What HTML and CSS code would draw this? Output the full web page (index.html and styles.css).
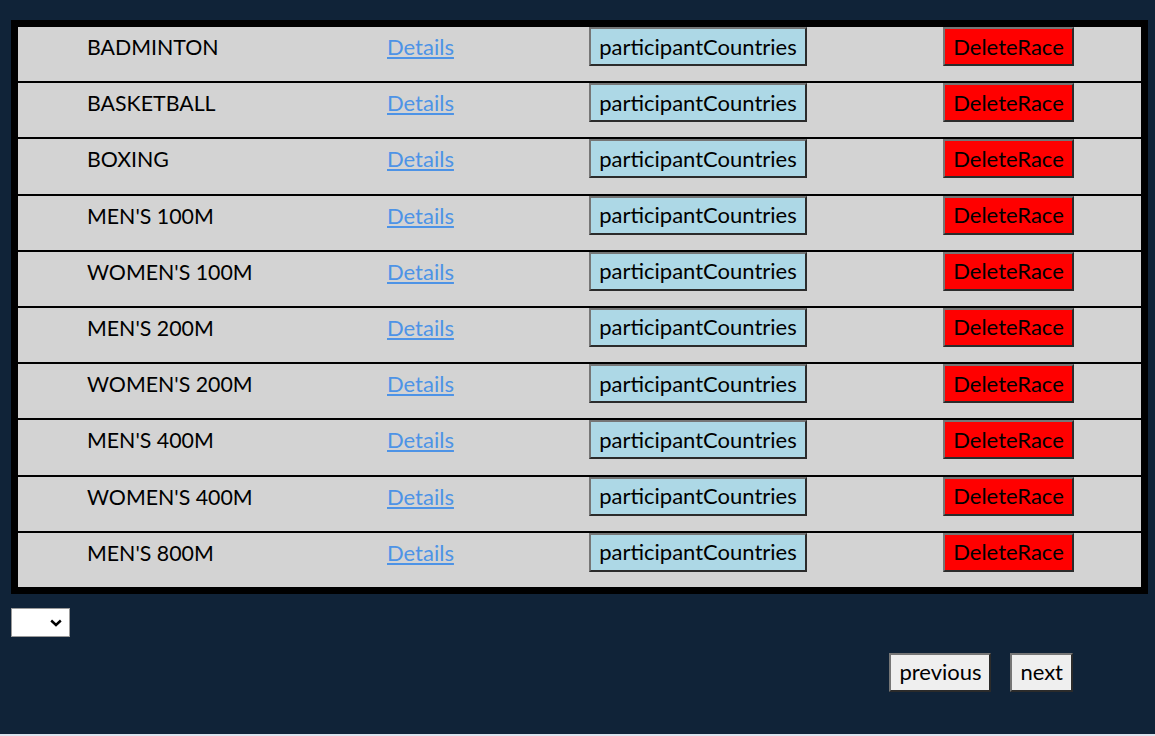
FILE: index.html
```html
<!DOCTYPE html>
<html>
<head>
<meta charset="utf-8">
<link rel="stylesheet" href="styles.css">
</head>
<body>
<div class="page">
  <div class="races">
    <div class="race-row">
      <span class="race-name">BADMINTON</span>
      <a class="details" href="#">Details</a>
      <div><button class="btn btn-countries">participantCountries</button></div>
      <div><button class="btn btn-delete">DeleteRace</button></div>
    </div>
    <div class="race-row">
      <span class="race-name">BASKETBALL</span>
      <a class="details" href="#">Details</a>
      <div><button class="btn btn-countries">participantCountries</button></div>
      <div><button class="btn btn-delete">DeleteRace</button></div>
    </div>
    <div class="race-row">
      <span class="race-name">BOXING</span>
      <a class="details" href="#">Details</a>
      <div><button class="btn btn-countries">participantCountries</button></div>
      <div><button class="btn btn-delete">DeleteRace</button></div>
    </div>
    <div class="race-row">
      <span class="race-name">MEN'S 100M</span>
      <a class="details" href="#">Details</a>
      <div><button class="btn btn-countries">participantCountries</button></div>
      <div><button class="btn btn-delete">DeleteRace</button></div>
    </div>
    <div class="race-row">
      <span class="race-name">WOMEN'S 100M</span>
      <a class="details" href="#">Details</a>
      <div><button class="btn btn-countries">participantCountries</button></div>
      <div><button class="btn btn-delete">DeleteRace</button></div>
    </div>
    <div class="race-row">
      <span class="race-name">MEN'S 200M</span>
      <a class="details" href="#">Details</a>
      <div><button class="btn btn-countries">participantCountries</button></div>
      <div><button class="btn btn-delete">DeleteRace</button></div>
    </div>
    <div class="race-row">
      <span class="race-name">WOMEN'S 200M</span>
      <a class="details" href="#">Details</a>
      <div><button class="btn btn-countries">participantCountries</button></div>
      <div><button class="btn btn-delete">DeleteRace</button></div>
    </div>
    <div class="race-row">
      <span class="race-name">MEN'S 400M</span>
      <a class="details" href="#">Details</a>
      <div><button class="btn btn-countries">participantCountries</button></div>
      <div><button class="btn btn-delete">DeleteRace</button></div>
    </div>
    <div class="race-row">
      <span class="race-name">WOMEN'S 400M</span>
      <a class="details" href="#">Details</a>
      <div><button class="btn btn-countries">participantCountries</button></div>
      <div><button class="btn btn-delete">DeleteRace</button></div>
    </div>
    <div class="race-row">
      <span class="race-name">MEN'S 800M</span>
      <a class="details" href="#">Details</a>
      <div><button class="btn btn-countries">participantCountries</button></div>
      <div><button class="btn btn-delete">DeleteRace</button></div>
    </div>
  </div>
  <div class="select-wrap">
    <select class="page-size"><option></option></select>
    <svg class="chevron" width="12" height="8" viewBox="0 0 12 8"><path d="M1.2 1.5 L6 6 L10.8 1.5" fill="none" stroke="#000" stroke-width="2.4"/></svg>
  </div>
  <div class="pager">
    <button class="btn btn-page btn-prev">previous</button>
    <button class="btn btn-page">next</button>
  </div>
</div>
</body>
</html>
```
FILE: styles.css
```css
html {
  background: #dde3ee;
}
body {
  margin: 0;
  font-family: Lato, "Open Sans", sans-serif;
}
.page {
  background: #102338;
  height: 734px;
  box-sizing: border-box;
  padding: 20px 7px 0 11px;
}
.races {
  width: 1137px;
  box-sizing: border-box;
  border: 7px solid #000;
  background: #d3d3d3;
}
.race-row {
  display: grid;
  grid-template-columns: 300px 202px 354px 1fr;
  align-items: start;
  height: 56.2px;
  box-sizing: border-box;
  padding-left: 69px;
  border-bottom: 2px solid #000;
  font-size: 21.33px;
  line-height: 39px;
  color: #000;
}
.race-row:last-child {
  border-bottom: none;
  height: 54.2px;
}
.race-name {
  white-space: nowrap;
  padding-top: 1px;
}
.details {
  color: #4d93e6;
  font-size: 22px;
  justify-self: start;
}
.btn {
  font-family: Lato, "Open Sans", sans-serif;
  font-size: 22px;
  height: 39px;
  line-height: 26px;
  padding: 0 8px;
  border-width: 2px;
  border-style: solid;
  border-color: #767676 #2b2b2b #2b2b2b #767676;
  border-radius: 0;
  color: #000;
  display: block;
  white-space: nowrap;
}
.btn-countries {
  background: #add8e6;
  width: 218px;
}
.btn-delete {
  background: #ff0000;
  width: 131px;
}
.select-wrap {
  position: relative;
  width: 59px;
  height: 29px;
  margin-top: 14px;
}
.page-size {
  display: block;
  width: 59px;
  height: 29px;
  background: #fff;
  border: 1px solid #9a9a9a;
  border-radius: 0;
  appearance: none;
  -webkit-appearance: none;
}
.chevron {
  position: absolute;
  left: 39px;
  top: 11px;
  pointer-events: none;
}
.pager {
  display: flex;
  justify-content: flex-end;
  gap: 19px;
  margin-top: 16px;
  padding-right: 75px;
}
.btn-page {
  background: #efefef;
  height: 39px;
}
.btn-prev {
  width: 102px;
}
```
